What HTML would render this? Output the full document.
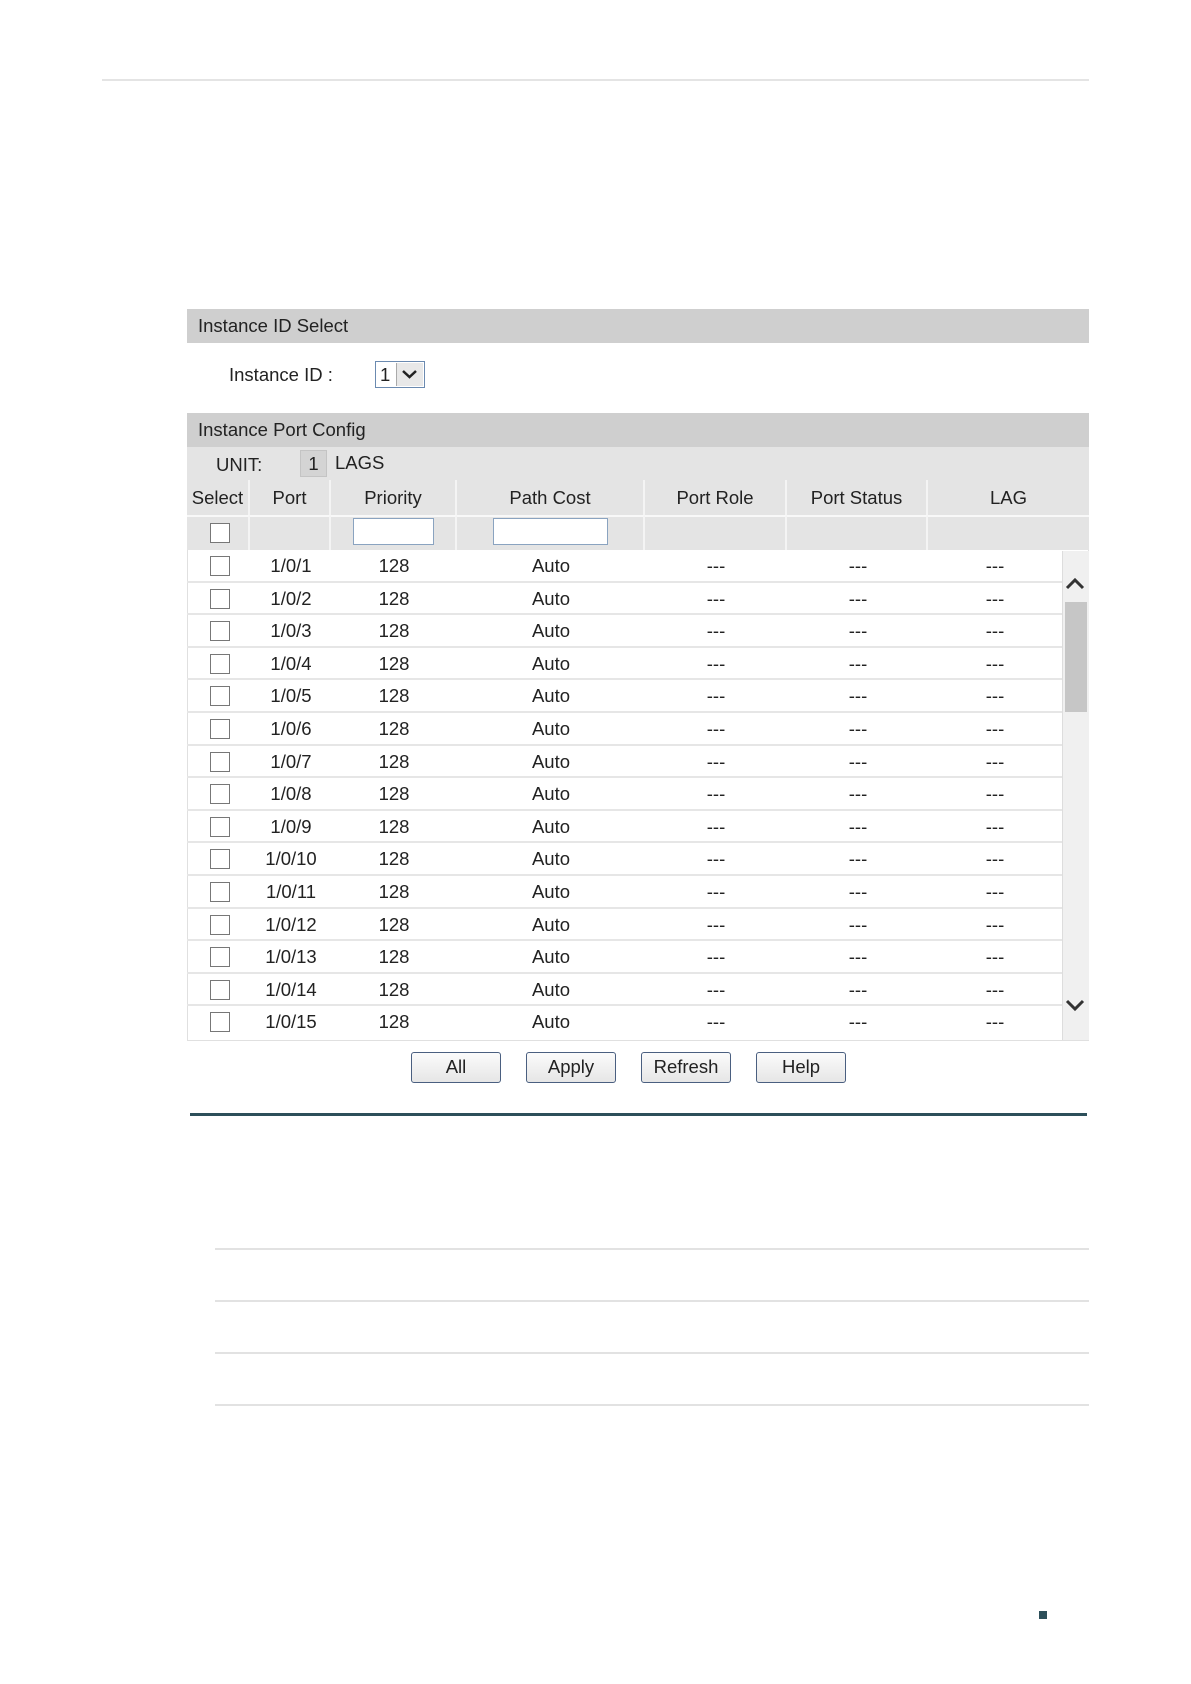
<!DOCTYPE html>
<html><head><meta charset="utf-8"><style>
*{margin:0;padding:0;box-sizing:border-box}
body{width:1191px;height:1684px;background:#fff;position:relative;font-family:"Liberation Sans",Arial,sans-serif;color:#222;overflow:hidden}
.a{position:absolute}
.bar{position:absolute;left:187px;width:902px;background:#cfcfcf;font-size:18.5px;padding-left:11px;line-height:34px;color:#222}
.gl{position:absolute;left:215px;width:874px;height:2px;background:#e2e2e2}
.hdr{position:absolute;top:480px;height:35px;line-height:35px;text-align:center;font-size:18.5px;border-right:2px solid #f4f4f4}
.flt{position:absolute;top:515px;height:35px;border-right:2px solid #f4f4f4;border-top:2px solid #f8f8f8}
.row{position:absolute;left:187px;width:875px;height:32.6px;border-bottom:2px solid #e6e6e6;font-size:18.5px;line-height:31px}
.row span{position:absolute;top:0;text-align:center;width:120px}
.cb{position:absolute;width:20px;height:20px;border:1.5px solid #777;background:#fff}
.btn{position:absolute;top:1052px;height:31px;width:90px;border:1.5px solid #4a5f80;border-radius:3px;background:linear-gradient(#fbfbfb,#e6e6e6);text-align:center;font-size:18.5px;line-height:28px}
</style></head><body>
<div class="a" style="left:102px;top:79px;width:987px;height:2px;background:#e4e4e4"></div>

<div class="bar" style="top:309px;height:34px">Instance ID Select</div>
<div class="a" style="left:229px;top:362px;font-size:18.5px;line-height:25px">Instance ID :</div>
<div class="a" style="left:375px;top:361px;width:50px;height:27px;border:1.5px solid #6b8ab0;background:#fff"></div>
<div class="a" style="left:380px;top:362px;font-size:18.5px;line-height:25px">1</div>
<div class="a" style="left:396px;top:363px;width:27px;height:23px;background:#e8e8e8;border-left:1px solid #aaa"></div>
<svg class="a" style="left:401px;top:368px" width="17" height="12"><path d="M2 3 L8.5 9 L15 3" stroke="#222" stroke-width="2.5" fill="none"/></svg>

<div class="bar" style="top:413px;height:34px">Instance Port Config</div>
<div class="a" style="left:187px;top:447px;width:902px;height:103px;background:#e4e4e4"></div>
<div class="a" style="left:216px;top:450px;font-size:18.5px;line-height:30px">UNIT:</div>
<div class="a" style="left:300px;top:450px;width:27px;height:27px;background:#d4d4d4;border:1px solid #c4c4c4;font-size:18.5px;text-align:center;line-height:25px">1</div>
<div class="a" style="left:335px;top:448px;font-size:18.5px;line-height:30px">LAGS</div>

<div class="hdr" style="left:187px;width:63px">Select</div>
<div class="hdr" style="left:250px;width:81px">Port</div>
<div class="hdr" style="left:331px;width:126px">Priority</div>
<div class="hdr" style="left:457px;width:188px">Path Cost</div>
<div class="hdr" style="left:645px;width:142px">Port Role</div>
<div class="hdr" style="left:787px;width:141px">Port Status</div>
<div class="hdr" style="left:928px;width:161px;border-right:none">LAG</div>
<div class="flt" style="left:187px;width:63px"></div>
<div class="flt" style="left:250px;width:81px"></div>
<div class="flt" style="left:331px;width:126px"></div>
<div class="flt" style="left:457px;width:188px"></div>
<div class="flt" style="left:645px;width:142px"></div>
<div class="flt" style="left:787px;width:141px"></div>
<div class="flt" style="left:928px;width:161px;border-right:none"></div>
<div class="cb" style="left:210px;top:523px"></div>
<div class="a" style="left:353px;top:518px;width:81px;height:27px;border:1.5px solid #8aa3c0;background:#fff"></div>
<div class="a" style="left:493px;top:518px;width:115px;height:27px;border:1.5px solid #8aa3c0;background:#fff"></div>

<div class="a" style="left:187px;top:550px;width:902px;height:491px;border:1px solid #e0e0e0;border-top:none;background:#fff"></div>
<div class="a" style="left:1062px;top:551px;width:27px;height:489px;background:#f0f0f0;border-left:1px solid #ddd"></div>
<div class="a" style="left:1065px;top:602px;width:22px;height:110px;background:#c6c6c6"></div>
<svg class="a" style="left:1064px;top:576px" width="22" height="16"><path d="M3 12 L11 4 L19 12" stroke="#333" stroke-width="3" fill="none"/></svg>
<svg class="a" style="left:1064px;top:997px" width="22" height="16"><path d="M3 4 L11 12 L19 4" stroke="#333" stroke-width="3" fill="none"/></svg>

<div class="row" style="top:550px"><div class="cb" style="left:23px;top:6px"></div><span style="left:44px">1/0/1</span><span style="left:147px">128</span><span style="left:304px">Auto</span><span style="left:469px">---</span><span style="left:611px">---</span><span style="left:748px">---</span></div>
<div class="row" style="top:582.6px"><div class="cb" style="left:23px;top:6px"></div><span style="left:44px">1/0/2</span><span style="left:147px">128</span><span style="left:304px">Auto</span><span style="left:469px">---</span><span style="left:611px">---</span><span style="left:748px">---</span></div>
<div class="row" style="top:615.2px"><div class="cb" style="left:23px;top:6px"></div><span style="left:44px">1/0/3</span><span style="left:147px">128</span><span style="left:304px">Auto</span><span style="left:469px">---</span><span style="left:611px">---</span><span style="left:748px">---</span></div>
<div class="row" style="top:647.8px"><div class="cb" style="left:23px;top:6px"></div><span style="left:44px">1/0/4</span><span style="left:147px">128</span><span style="left:304px">Auto</span><span style="left:469px">---</span><span style="left:611px">---</span><span style="left:748px">---</span></div>
<div class="row" style="top:680.4px"><div class="cb" style="left:23px;top:6px"></div><span style="left:44px">1/0/5</span><span style="left:147px">128</span><span style="left:304px">Auto</span><span style="left:469px">---</span><span style="left:611px">---</span><span style="left:748px">---</span></div>
<div class="row" style="top:713px"><div class="cb" style="left:23px;top:6px"></div><span style="left:44px">1/0/6</span><span style="left:147px">128</span><span style="left:304px">Auto</span><span style="left:469px">---</span><span style="left:611px">---</span><span style="left:748px">---</span></div>
<div class="row" style="top:745.6px"><div class="cb" style="left:23px;top:6px"></div><span style="left:44px">1/0/7</span><span style="left:147px">128</span><span style="left:304px">Auto</span><span style="left:469px">---</span><span style="left:611px">---</span><span style="left:748px">---</span></div>
<div class="row" style="top:778.2px"><div class="cb" style="left:23px;top:6px"></div><span style="left:44px">1/0/8</span><span style="left:147px">128</span><span style="left:304px">Auto</span><span style="left:469px">---</span><span style="left:611px">---</span><span style="left:748px">---</span></div>
<div class="row" style="top:810.8px"><div class="cb" style="left:23px;top:6px"></div><span style="left:44px">1/0/9</span><span style="left:147px">128</span><span style="left:304px">Auto</span><span style="left:469px">---</span><span style="left:611px">---</span><span style="left:748px">---</span></div>
<div class="row" style="top:843.4px"><div class="cb" style="left:23px;top:6px"></div><span style="left:44px">1/0/10</span><span style="left:147px">128</span><span style="left:304px">Auto</span><span style="left:469px">---</span><span style="left:611px">---</span><span style="left:748px">---</span></div>
<div class="row" style="top:876px"><div class="cb" style="left:23px;top:6px"></div><span style="left:44px">1/0/11</span><span style="left:147px">128</span><span style="left:304px">Auto</span><span style="left:469px">---</span><span style="left:611px">---</span><span style="left:748px">---</span></div>
<div class="row" style="top:908.6px"><div class="cb" style="left:23px;top:6px"></div><span style="left:44px">1/0/12</span><span style="left:147px">128</span><span style="left:304px">Auto</span><span style="left:469px">---</span><span style="left:611px">---</span><span style="left:748px">---</span></div>
<div class="row" style="top:941.2px"><div class="cb" style="left:23px;top:6px"></div><span style="left:44px">1/0/13</span><span style="left:147px">128</span><span style="left:304px">Auto</span><span style="left:469px">---</span><span style="left:611px">---</span><span style="left:748px">---</span></div>
<div class="row" style="top:973.8px"><div class="cb" style="left:23px;top:6px"></div><span style="left:44px">1/0/14</span><span style="left:147px">128</span><span style="left:304px">Auto</span><span style="left:469px">---</span><span style="left:611px">---</span><span style="left:748px">---</span></div>
<div class="row" style="top:1006.4px;border-bottom:none"><div class="cb" style="left:23px;top:6px"></div><span style="left:44px">1/0/15</span><span style="left:147px">128</span><span style="left:304px">Auto</span><span style="left:469px">---</span><span style="left:611px">---</span><span style="left:748px">---</span></div>

<div class="btn" style="left:411px">All</div>
<div class="btn" style="left:526px">Apply</div>
<div class="btn" style="left:641px">Refresh</div>
<div class="btn" style="left:756px">Help</div>

<div class="a" style="left:190px;top:1113px;width:897px;height:3px;background:#2d4f5a"></div>

<div class="gl" style="top:1248px"></div>
<div class="gl" style="top:1300px"></div>
<div class="gl" style="top:1352px"></div>
<div class="gl" style="top:1404px"></div>

<div class="a" style="left:1039px;top:1611px;width:8px;height:8px;background:#2d4f5a"></div>
</body></html>
